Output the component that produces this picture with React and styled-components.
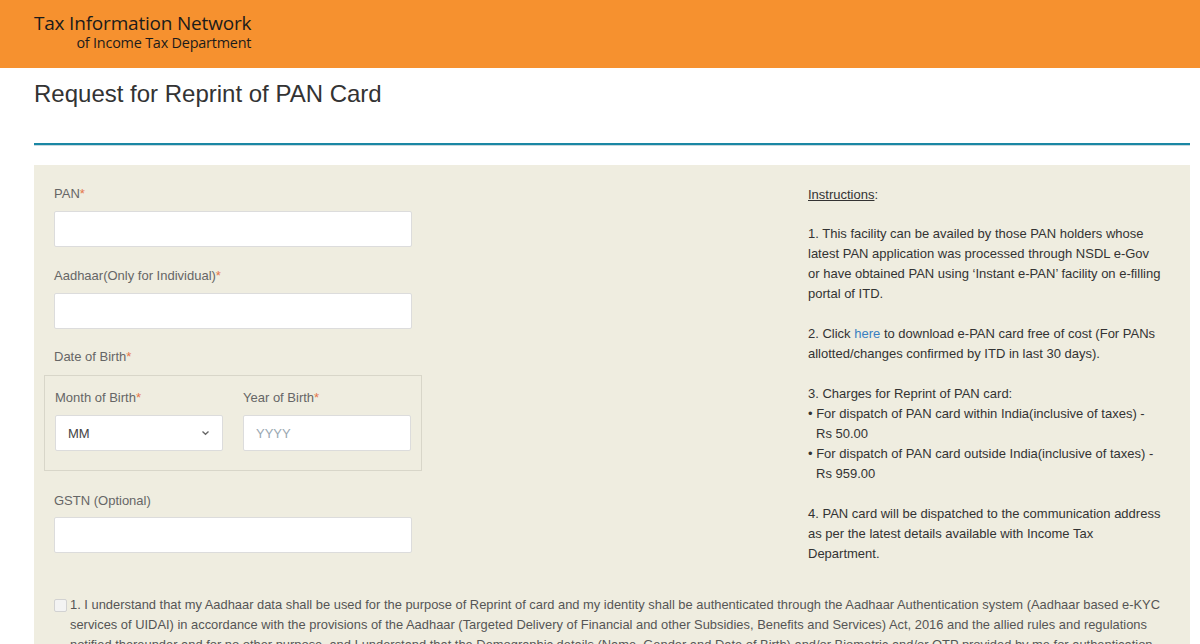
import React from "react";
import styled, { createGlobalStyle } from "styled-components";

const GlobalStyle = createGlobalStyle`
  html, body {
    margin: 0;
    padding: 0;
    background: #fff;
    font-family: "Liberation Sans", Arial, sans-serif;
    overflow: hidden;
  }
`;

const Header = styled.header`
  background: #f6912f;
  height: 68px;
  padding: 12px 0 0 34px;
  box-sizing: border-box;
`;

const Brand = styled.div`
  display: inline-flex;
  flex-direction: column;
  align-items: flex-end;
  font-family: "Open Sans", sans-serif;
  color: #1b1b1b;
`;

const BrandTitle = styled.div`
  font-size: 19px;
  line-height: 22px;
  letter-spacing: -0.2px;
`;

const BrandSub = styled.div`
  font-size: 14.4px;
  line-height: 18px;
  letter-spacing: -0.2px;
`;

const Container = styled.div`
  margin: 0 10px 0 34px;
`;

const Title = styled.h1`
  margin: 0;
  padding: 13px 0 36px;
  font-size: 24px;
  font-weight: 400;
  line-height: 26px;
  color: #333;
  border-bottom: 2px solid #1a87a4;
  box-shadow: 0 1px 0 #c7d9df;
`;

const Panel = styled.section`
  margin-top: 20px;
  background: #efede0;
  padding: 20px 20px 0;
`;

const Columns = styled.div`
  display: grid;
  grid-template-columns: 358px 1fr 362px;
`;

const FormCol = styled.div`
  display: flex;
  flex-direction: column;
`;

const Field = styled.div`
  margin-bottom: ${(p) => p.$gap ?? 20}px;
`;

const Label = styled.label`
  display: block;
  font-size: 13px;
  line-height: 18px;
  color: #666;
  margin-bottom: ${(p) => p.$gap ?? 8}px;
`;

const Star = styled.span`
  color: #e4764b;
`;

const Input = styled.input`
  display: block;
  box-sizing: border-box;
  width: 100%;
  height: 36px;
  border: 1px solid #dcdcdc;
  border-radius: 2px;
  background: #fff;
  padding: 0 12px;
  font-family: "Liberation Sans", Arial, sans-serif;
  font-size: 13px;
  color: #555;
  outline: none;
  &::placeholder {
    color: #9aa8b2;
  }
`;

const DobBox = styled.div`
  margin: 0 -10px 21px;
  border: 1px solid #d8d6c9;
  padding: 13px 10px 19px;
  display: grid;
  grid-template-columns: 168px 168px;
  column-gap: 20px;
`;

const Select = styled.div`
  box-sizing: border-box;
  height: 36px;
  border: 1px solid #dcdcdc;
  border-radius: 2px;
  background: #fff;
  padding: 0 12px;
  display: flex;
  align-items: center;
  justify-content: space-between;
  font-size: 13px;
  color: #444;
`;

const Instructions = styled.div`
  grid-column: 3;
  padding-right: 8px;
  font-size: 13px;
  line-height: 20px;
  color: #333;
`;

const Heading = styled.div`
  margin-bottom: 19px;
  span {
    text-decoration: underline;
  }
`;

const Para = styled.p`
  margin: 0 0 20px;
  &:last-child {
    margin-bottom: 0;
  }
`;

const Bullet = styled.div`
  padding-left: 8px;
  text-indent: -8px;
`;

const Link = styled.a`
  color: #3a7fc1;
  text-decoration: none;
`;

const Consent = styled.div`
  display: flex;
  align-items: flex-start;
  gap: 3px;
  margin-top: 31px;
  font-size: 12.9px;
  line-height: 20px;
  color: #555;
`;

const Check = styled.span`
  flex: none;
  width: 11px;
  height: 11px;
  margin-top: 4px;
  border: 1px solid #d2d2d2;
  border-radius: 2px;
  background: #f3f3f3;
`;

const Chevron = () => (
  <svg width="9" height="6" viewBox="0 0 9 6">
    <path d="M1.5 1.5 L4.5 4.3 L7.5 1.5" fill="none" stroke="#666" strokeWidth="1.3" />
  </svg>
);

const App = () => (
  <>
    <GlobalStyle />
    <Header>
      <Brand>
        <BrandTitle>Tax Information Network</BrandTitle>
        <BrandSub>of Income Tax Department</BrandSub>
      </Brand>
    </Header>
    <Container>
      <Title>Request for Reprint of PAN Card</Title>
      <Panel>
        <Columns>
          <FormCol>
            <Field>
              <Label>
                PAN<Star>*</Star>
              </Label>
              <Input />
            </Field>
            <Field $gap={19}>
              <Label>
                Aadhaar(Only for Individual)<Star>*</Star>
              </Label>
              <Input />
            </Field>
            <Label $gap={9}>
              Date of Birth<Star>*</Star>
            </Label>
            <DobBox>
              <div>
                <Label>
                  Month of Birth<Star>*</Star>
                </Label>
                <Select>
                  MM
                  <Chevron />
                </Select>
              </div>
              <div>
                <Label>
                  Year of Birth<Star>*</Star>
                </Label>
                <Input placeholder="YYYY" />
              </div>
            </DobBox>
            <Field $gap={0}>
              <Label $gap={7}>GSTN (Optional)</Label>
              <Input />
            </Field>
          </FormCol>
          <Instructions>
            <Heading>
              <span>Instructions</span>:
            </Heading>
            <Para>
              1. This facility can be availed by those PAN holders whose latest PAN application was
              processed through NSDL e-Gov or have obtained PAN using ‘Instant e-PAN’ facility on
              e-filling portal of ITD.
            </Para>
            <Para>
              2. Click <Link href="#">here</Link> to download e-PAN card free of cost (For PANs
              allotted/changes confirmed by ITD in last 30 days).
            </Para>
            <Para>
              3. Charges for Reprint of PAN card:
              <Bullet>• For dispatch of PAN card within India(inclusive of taxes) - Rs 50.00</Bullet>
              <Bullet>
                • For dispatch of PAN card outside India(inclusive of taxes) - Rs 959.00
              </Bullet>
            </Para>
            <Para>
              4. PAN card will be dispatched to the communication address as per the latest details
              available with Income Tax Department.
            </Para>
          </Instructions>
        </Columns>
        <Consent>
          <Check />
          <span>
            1. I understand that my Aadhaar data shall be used for the purpose of Reprint of card
            and my identity shall be authenticated through the Aadhaar Authentication system
            (Aadhaar based e-KYC services of UIDAI) in accordance with the provisions of the Aadhaar
            (Targeted Delivery of Financial and other Subsidies, Benefits and Services) Act, 2016
            and the allied rules and regulations notified thereunder and for no other purpose, and
            I understand that the Demographic details (Name, Gender and Date of Birth) and/or
            Biometric and/or OTP provided by me for authentication shall be used only for
            authenticating my identity through the Aadhaar Authentication system for that specific
            transaction.
          </span>
        </Consent>
      </Panel>
    </Container>
  </>
);

export default App;
